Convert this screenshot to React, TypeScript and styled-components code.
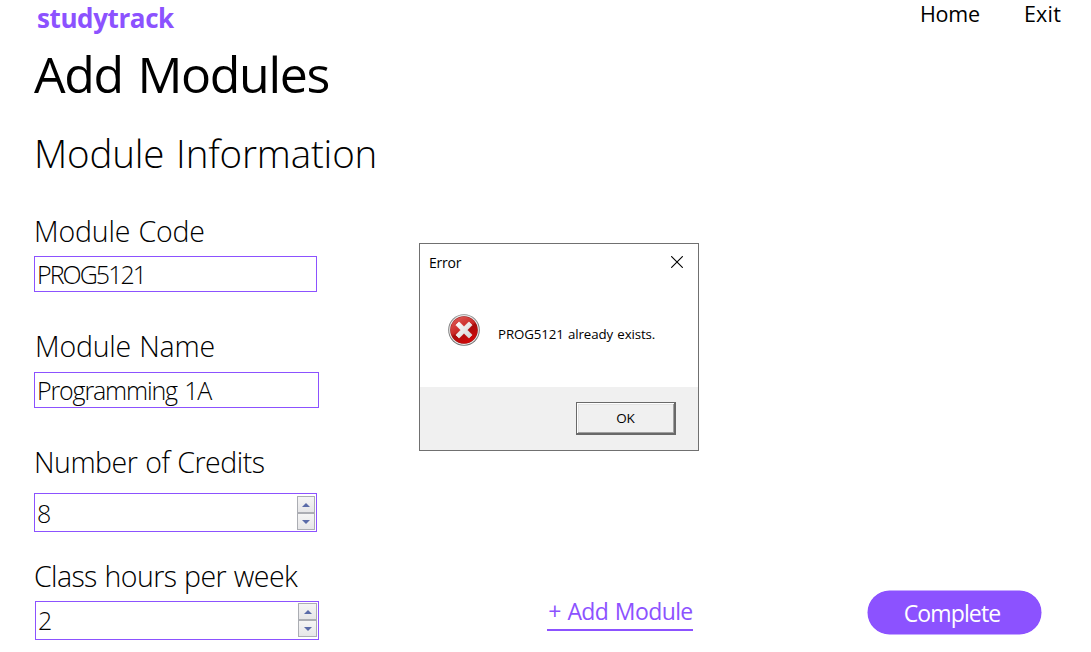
import React from "react";
import styled, { createGlobalStyle } from "styled-components";

const PURPLE = "#8c52ff";

const GlobalStyle = createGlobalStyle`
  * { box-sizing: border-box; }
  html, body { margin: 0; padding: 0; background: #fff; overflow: hidden; }
  body { font-family: "Open Sans", "Noto Sans", sans-serif; color: #000; }
  h1, h2, p { margin: 0; font-weight: 400; }
  button { font-family: inherit; color: inherit; margin: 0; padding: 0; cursor: pointer; }
`;

const Page = styled.div`
  position: relative;
  width: 1091px;
  height: 652px;
  display: flex;
  flex-direction: column;
  white-space: nowrap;
`;

const Header = styled.header`
  height: 43px;
  display: flex;
  justify-content: space-between;
  align-items: flex-start;
  padding: 0 30px 0 37px;
`;

const Brand = styled.div`
  font-size: 26px;
  line-height: 37px;
  font-weight: 700;
  letter-spacing: -0.4px;
  color: ${PURPLE};
`;

const Nav = styled.nav`
  display: flex;
  gap: 44px;
`;

const NavLink = styled.a<{ $spacing: number }>`
  font-size: 21.5px;
  line-height: 28px;
  letter-spacing: ${(p) => p.$spacing}px;
`;

const Title = styled.h1`
  height: 62px;
  margin: 0 0 23px 34px;
  font-size: 50px;
  line-height: 62px;
  letter-spacing: -1.33px;
  word-spacing: 3px;
`;

const Section = styled.h2`
  height: 50px;
  margin: 0 0 35px 34px;
  font-size: 38.5px;
  line-height: 50px;
  letter-spacing: -0.17px;
  word-spacing: 2px;
  && { font-weight: 300; }
`;

const Content = styled.main`
  display: grid;
  grid-template-columns: 285px 1fr;
  padding-left: 34px;
  padding-right: 50px;
`;

const Form = styled.form`
  display: flex;
  flex-direction: column;
  align-items: flex-start;
`;

const Field = styled.div<{ $gap: number; $after: number; $indent?: number }>`
  display: flex;
  flex-direction: column;
  gap: ${(p) => p.$gap}px;
  margin-bottom: ${(p) => p.$after}px;
  padding-left: ${(p) => p.$indent ?? 0}px;
`;

const Label = styled.label<{ $spacing: number; $shift?: number }>`
  height: 36px;
  margin-left: ${(p) => p.$shift ?? 0}px;
  font-size: 28.5px;
  line-height: 36px;
  font-weight: 300;
  letter-spacing: ${(p) => p.$spacing}px;
  word-spacing: 1px;
`;

const InputBox = styled.div<{ $width: number; $tall?: boolean }>`
  width: ${(p) => p.$width}px;
  height: ${(p) => (p.$tall ? 39 : 36)}px;
  border: 1px solid ${PURPLE};
  background: #fff;
  display: flex;
  justify-content: space-between;
  padding: 0 1px 0 2px;
`;

const Value = styled.span<{ $spacing: number; $line?: number }>`
  font-size: 25px;
  line-height: ${(p) => p.$line ?? 34}px;
  font-weight: 300;
  letter-spacing: ${(p) => p.$spacing}px;
  word-spacing: 2px;
`;

const Spinner = styled.div<{ $top: number; $width: number }>`
  display: flex;
  flex-direction: column;
  width: ${(p) => p.$width}px;
  height: 34px;
  margin-top: ${(p) => p.$top}px;
`;

const SpinButton = styled.button`
  width: 100%;
  height: 17px;
  border: 1px solid #abadb3;
  background: linear-gradient(#f5f5f5, #e6e6e8);
  display: flex;
  align-items: center;
  justify-content: center;
`;

const Actions = styled.div`
  display: flex;
  justify-content: space-between;
  align-self: end;
  align-items: flex-start;
  height: 50px;
  padding-left: 228px;
`;

const AddLink = styled.button`
  width: 146px;
  height: 41px;
  border: 0;
  border-bottom: 2px solid ${PURPLE};
  background: none;
  && { color: ${PURPLE}; padding-left: 1px; }
  font-size: 23px;
  line-height: 42px;
  letter-spacing: -0.6px;
  word-spacing: 1.2px;
  white-space: nowrap;
`;

const CompleteButton = styled.button`
  width: 173px;
  height: 43px;
  border: 0;
  border-radius: 22px;
  background: ${PURPLE};
  box-shadow: 0 0 0 0.5px ${PURPLE};
  && { color: #fff; padding-right: 4px; }
  font-size: 23px;
  line-height: 44px;
  letter-spacing: -0.85px;
  margin: 1px 0.5px 0 0;
`;

const Dialog = styled.div`
  position: absolute;
  left: 419px;
  top: 243px;
  width: 280px;
  height: 208px;
  border: 1px solid #707070;
  background: #fff;
  display: flex;
  flex-direction: column;
`;

const TitleBar = styled.div`
  height: 36px;
  display: flex;
  justify-content: space-between;
  align-items: center;
  padding: 0 15px 0 9px;
  font-size: 14px;
  line-height: 20px;
  letter-spacing: -0.2px;
`;

const DialogTitle = styled.span`
  padding-top: 2px;
`;

const DialogBody = styled.div`
  flex: 1;
  display: flex;
  align-items: flex-start;
  padding: 34px 0 0 28px;
`;

const Message = styled.p`
  padding: 11px 0 0 18px;
  font-size: 13.3px;
  line-height: 18px;
  letter-spacing: -0.12px;
  word-spacing: 1px;
`;

const DialogFooter = styled.div`
  height: 63px;
  background: #f0f0f0;
  display: flex;
  justify-content: flex-end;
  padding: 15px 22px 0 0;
`;

const OkButton = styled.button`
  width: 100px;
  height: 33px;
  border: 1px solid #696969;
  background: #f0f0f0;
  box-shadow: inset -1px -1px 0 #696969, inset 1px 1px 0 #fff,
    inset -2px -2px 0 #a0a0a0, inset 2px 2px 0 #e3e3e3;
  && { padding: 0 1px 2px 0; }
  font-size: 13.5px;
  line-height: 28px;
  letter-spacing: -0.2px;
`;

const Arrow = ({ down }: { down?: boolean }) => (
  <svg width="8" height="4" viewBox="0 0 8 4">
    <path d={down ? "M0 0H8L4 4Z" : "M0 4H8L4 0Z"} fill="#5a6ba8" />
  </svg>
);

const Stepper = ({ top, width }: { top: number; width: number }) => (
  <Spinner $top={top} $width={width}>
    <SpinButton type="button" aria-label="Increase"><Arrow /></SpinButton>
    <SpinButton type="button" aria-label="Decrease"><Arrow down /></SpinButton>
  </Spinner>
);

const CloseIcon = () => (
  <svg width="12" height="12" viewBox="0 0 12 12">
    <path d="M0.2 0.2L11.8 11.8M11.8 0.2L0.2 11.8" stroke="#000" strokeWidth="1.1" />
  </svg>
);

const ErrorIcon = () => (
  <svg width="32" height="32" viewBox="0 0 32 32">
    <defs>
      <linearGradient id="ring" x1="0" y1="0" x2="0" y2="1">
        <stop offset="0" stopColor="#8a8a8a" />
        <stop offset="1" stopColor="#6e6e6e" />
      </linearGradient>
      <linearGradient id="red" x1="0.2" y1="0" x2="0.75" y2="1">
        <stop offset="0" stopColor="#dd5a55" />
        <stop offset="0.45" stopColor="#cb2a28" />
        <stop offset="0.52" stopColor="#a80c0c" />
        <stop offset="1" stopColor="#d60808" />
      </linearGradient>
      <linearGradient id="cross" x1="0" y1="0" x2="1" y2="1">
        <stop offset="0" stopColor="#fff" />
        <stop offset="1" stopColor="#d2d2d2" />
      </linearGradient>
    </defs>
    <circle cx="16" cy="16" r="15.8" fill="url(#ring)" />
    <circle cx="16" cy="16" r="14.9" fill="#e9e9e9" />
    <circle cx="16" cy="16" r="13.8" fill="#9c1a1a" />
    <circle cx="16" cy="16" r="13.3" fill="url(#red)" />
    <path
      d="M11.1 7.9L16 12.8L20.9 7.9L24.1 11.1L19.2 16L24.1 20.9L20.9 24.1L16 19.2L11.1 24.1L7.9 20.9L12.8 16L7.9 11.1Z"
      fill="url(#cross)"
      stroke="url(#cross)"
      strokeWidth="0.8"
      strokeLinejoin="round"
    />
  </svg>
);

export default function App() {
  return (
    <>
      <GlobalStyle />
      <Page>
        <Header>
          <Brand>studytrack</Brand>
          <Nav>
            <NavLink $spacing={-0.2}>Home</NavLink>
            <NavLink $spacing={0.2}>Exit</NavLink>
          </Nav>
        </Header>
        <Title>Add Modules</Title>
        <Section>Module Information</Section>
        <Content>
          <Form>
            <Field $gap={7} $after={36}>
              <Label $spacing={-0.17}>Module Code</Label>
              <InputBox $width={283}><Value $spacing={-1.95}>PROG5121</Value></InputBox>
            </Field>
            <Field $gap={8} $after={36}>
              <Label $spacing={-0.2} $shift={1}>Module Name</Label>
              <InputBox $width={285}><Value $spacing={-1.15} $line={35}>Programming 1A</Value></InputBox>
            </Field>
            <Field $gap={13} $after={26}>
              <Label $spacing={-0.5}>Number of Credits</Label>
              <InputBox $width={283} $tall>
                <Value $spacing={0} $line={38}>8</Value>
                <Stepper top={2} width={18} />
              </InputBox>
            </Field>
            <Field $gap={7} $after={0} $indent={1}>
              <Label $spacing={-0.6} $shift={-1}>Class hours per week</Label>
              <InputBox $width={284} $tall>
                <Value $spacing={0} $line={36}>2</Value>
                <Stepper top={1} width={19} />
              </InputBox>
            </Field>
          </Form>
          <Actions>
            <AddLink>+ Add Module</AddLink>
            <CompleteButton>Complete</CompleteButton>
          </Actions>
        </Content>
        <Dialog role="dialog" aria-label="Error">
          <TitleBar>
            <DialogTitle>Error</DialogTitle>
            <CloseIcon />
          </TitleBar>
          <DialogBody>
            <ErrorIcon />
            <Message>PROG5121 already exists.</Message>
          </DialogBody>
          <DialogFooter>
            <OkButton>OK</OkButton>
          </DialogFooter>
        </Dialog>
      </Page>
    </>
  );
}
